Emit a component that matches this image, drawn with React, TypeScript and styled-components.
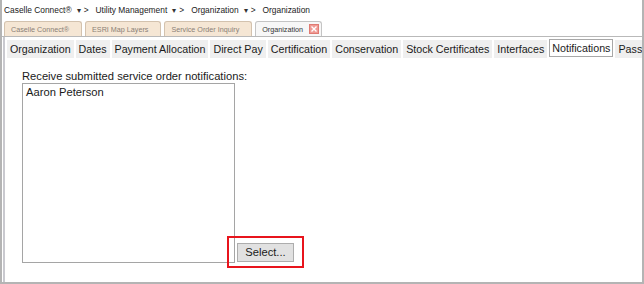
import React from 'react';
import styled, {createGlobalStyle} from 'styled-components';

const GlobalStyle = createGlobalStyle`
  html, body {
    margin: 0;
    padding: 0;
    background: #ffffff;
  }
  body {
    font-family: "Liberation Sans", Arial, sans-serif;
    color: #1a1a1a;
  }
`

const crumbs = ['Caselle Connect®', 'Utility Management', 'Organization'];
const docTabs = ['Caselle Connect®', 'ESRI Map Layers', 'Service Order Inquiry'];
const pageTabs = ['Organization', 'Dates', 'Payment Allocation', 'Direct Pay', 'Certification',
    'Conservation', 'Stock Certificates', 'Interfaces', 'Notifications', 'Passwords'];

const App = () => {
    return (
        <>
            <GlobalStyle/>
            <Frame>
                <Breadcrumb>
                    {crumbs.map(c => <Crumb key={c}>
                        <span>{c}</span>
                        <Caret>▾</Caret>
                        <Sep>&gt;</Sep>
                    </Crumb>)}
                    <span>Organization</span>
                </Breadcrumb>
                <DocTabStrip>
                    {docTabs.map(t => <DocTab key={t}>{t}</DocTab>)}
                    <DocTab active>
                        Organization
                        <CloseBox>
                            <svg width="8" height="8" viewBox="0 0 8 8">
                                <path d="M1.5 1.5 L6.5 6.5 M6.5 1.5 L1.5 6.5" stroke="#fff" strokeWidth="1.4"/>
                            </svg>
                        </CloseBox>
                    </DocTab>
                </DocTabStrip>
                <Body>
                    <PageTabStrip>
                        {pageTabs.map(t => <PageTab key={t} selected={t === 'Notifications'}>{t}</PageTab>)}
                    </PageTabStrip>
                    <Content>
                        <FieldLabel>Receive submitted service order notifications:</FieldLabel>
                        <ListRow>
                            <ListBox>
                                <ListItem>Aaron Peterson</ListItem>
                            </ListBox>
                            <Highlight>
                                <SelectButton>Select...</SelectButton>
                            </Highlight>
                        </ListRow>
                    </Content>
                </Body>
            </Frame>
        </>
    );
};
export default App

const Frame = styled.div`
  width: 644px;
  height: 284px;
  box-sizing: border-box;
  border-left: 2px solid #b4b4b4;
  border-right: 2px solid #b4b4b4;
  border-bottom: 2px solid #b4b4b4;
  overflow: hidden;
  display: flex;
  flex-direction: column;
  background: #fff;
`
const Breadcrumb = styled.div`
  height: 20px;
  display: flex;
  align-items: center;
  padding-left: 2px;
  font-size: 8.4px;
  color: #222;
  white-space: nowrap;
`
const Crumb = styled.div`
  display: flex;
  align-items: center;
`
const Caret = styled.span`
  margin-left: 5px;
  font-size: 7.5px;
  color: #333;
`
const Sep = styled.span`
  margin: 0 7px 0 3px;
`
const DocTabStrip = styled.div`
  height: 16px;
  display: flex;
  align-items: flex-end;
  gap: 3px;
  padding-left: 2px;
  border-bottom: 1px solid #b9b9b9;
`
const DocTab = styled.div<{active?: boolean}>`
  height: 15px;
  box-sizing: border-box;
  display: flex;
  align-items: center;
  padding: 0 ${p => p.active ? '2px' : '12px'} 0 6px;
  font-size: 7.2px;
  color: ${p => p.active ? '#333' : '#8a7f76'};
  background: ${p => p.active ? '#f7f7f7' : '#f5e6d4'};
  border: 1px solid ${p => p.active ? '#c4c4c4' : '#d3c2ae'};
  border-bottom: none;
  border-radius: 3px 3px 0 0;
  white-space: nowrap;
`
const CloseBox = styled.span`
  margin-left: 6px;
  width: 10px;
  height: 10px;
  background: #ef9a94;
  border: 1px solid #e07a72;
  box-sizing: border-box;
  display: flex;
  align-items: center;
  justify-content: center;
`
const Body = styled.div`
  flex: 1;
  margin-left: 1px;
  border-left: 2px solid #c9c9cf;
  display: flex;
  flex-direction: column;
`
const PageTabStrip = styled.div`
  display: flex;
  align-items: flex-end;
  gap: 2px;
  padding: 2px 0 0 2px;
  height: 21px;
  box-sizing: border-box;
  white-space: nowrap;
`
const PageTab = styled.div<{selected?: boolean}>`
  height: 18px;
  box-sizing: border-box;
  display: flex;
  align-items: center;
  padding: 0 2px;
  font-size: 10.7px;
  color: #1a1a1a;
  background: ${p => p.selected ? '#fff' : '#efefef'};
  border: 1px solid ${p => p.selected ? '#a8a8a8' : 'transparent'};
  margin-bottom: ${p => p.selected ? '1px' : '0'};
  flex-shrink: 0;
`
const Content = styled.div`
  padding: 12px 0 0 17px;
  display: flex;
  flex-direction: column;
`
const FieldLabel = styled.div`
  font-size: 11.2px;
  height: 13px;
  line-height: 13px;
  color: #1a1a1a;
`
const ListRow = styled.div`
  display: flex;
  align-items: flex-end;
`
const ListBox = styled.div`
  width: 213px;
  height: 180px;
  box-sizing: border-box;
  border: 1px solid #a5a5a5;
  padding: 2px 3px;
`
const ListItem = styled.div`
  font-size: 11.2px;
  line-height: 13px;
`
const Highlight = styled.div`
  margin: 0 0 -5px -8px;
  width: 77px;
  height: 32px;
  box-sizing: border-box;
  border: 2px solid #e8141c;
  display: flex;
  align-items: center;
  justify-content: center;
`
const SelectButton = styled.button`
  width: 57px;
  height: 19px;
  padding: 0;
  font-family: "Liberation Sans", Arial, sans-serif;
  font-size: 11.2px;
  color: #1a1a1a;
  background: #e1e1e1;
  border: 1px solid #adadad;
  border-radius: 0;
`
